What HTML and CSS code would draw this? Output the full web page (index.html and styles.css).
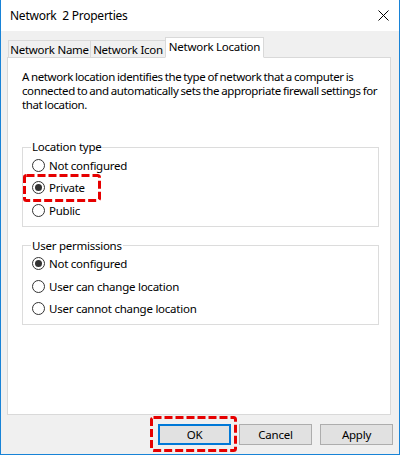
FILE: index.html
```html
<!DOCTYPE html>
<html>
<head>
<meta charset="utf-8">
<link rel="stylesheet" href="styles.css">
</head>
<body>
<div class="window">
  <div class="titlebar">
    <span class="title">Network&nbsp; 2 Properties</span>
    <svg class="close" width="11" height="11" viewBox="0 0 11 11"><path d="M0.5 0.5 L10.5 10.5 M10.5 0.5 L0.5 10.5" stroke="#000" stroke-width="1" fill="none"/></svg>
  </div>
  <div class="body">
    <div class="tabs">
      <div class="tab tab-name">Network Name</div>
      <div class="tab tab-icon">Network Icon</div>
      <div class="tab tab-loc active">Network Location</div>
    </div>
    <div class="panel">
      <p class="desc">A network location identifies the type of network that a computer is<br>connected to and automatically sets the appropriate firewall settings for<br>that location.</p>
      <fieldset class="group group-type">
        <legend>Location type</legend>
        <div class="radio"><span class="dot"></span>Not configured</div>
        <div class="radio"><span class="dot checked"></span>Private</div>
        <div class="radio"><span class="dot"></span>Public</div>
      </fieldset>
      <fieldset class="group group-perm">
        <legend>User permissions</legend>
        <div class="radio"><span class="dot checked"></span>Not configured</div>
        <div class="radio"><span class="dot"></span>User can change location</div>
        <div class="radio"><span class="dot"></span>User cannot change location</div>
      </fieldset>
    </div>
    <div class="buttons">
      <div class="btn default">OK</div>
      <div class="btn">Cancel</div>
      <div class="btn">Apply</div>
    </div>
  </div>
  <svg class="mark mark-private" width="78" height="28" viewBox="0 0 78 28"><rect x="1.5" y="1.5" width="75" height="25" rx="2" fill="none" stroke="#e60000" stroke-width="3" stroke-dasharray="8 3"/></svg>
  <svg class="mark mark-ok" width="87" height="36" viewBox="0 0 87 36"><rect x="1.5" y="1.5" width="84" height="33" rx="2" fill="none" stroke="#e60000" stroke-width="3" stroke-dasharray="8 3"/></svg>
</div>
</body>
</html>
```
FILE: styles.css
```css
html, body {
  margin: 0;
  padding: 0;
  background: #ffffff;
}
body {
  font-family: "Noto Sans", "Open Sans", sans-serif;
  font-size: 11.5px;
  letter-spacing: -0.25px;
  color: #000;
}
.window {
  position: relative;
  width: 400px;
  height: 455px;
  box-sizing: border-box;
  border: 1px solid #1883d7;
  border-top: none;
  display: flex;
  flex-direction: column;
}
.titlebar {
  height: 31px;
  flex: none;
  background: #fff;
  display: flex;
  align-items: center;
  justify-content: space-between;
  padding: 0 10px 0 9px;
}
.title {
  font-size: 12px;
}
.close {
  display: block;
}
.body {
  flex: 1;
  background: #f0f0f0;
  padding: 7px 8px 0 6px;
  display: flex;
  flex-direction: column;
}
.tabs {
  display: flex;
  align-items: flex-end;
  height: 20px;
  padding-left: 1px;
  position: relative;
  z-index: 1;
  margin-bottom: -1px;
}
.tab {
  box-sizing: border-box;
  border: 1px solid #d9d9d9;
  height: 18px;
  background: #f0f0f0;
  display: flex;
  align-items: center;
  justify-content: center;
  white-space: nowrap;
}
.tab-name { width: 83px; }
.tab-icon { width: 76px; margin-left: -1px; }
.tab-loc { width: 99px; margin-left: -1px; }
.tab.active {
  height: 21px;
  background: #fff;
  border-bottom: 1px solid #fff;
  align-items: flex-start;
  padding-top: 1px;
}
.panel {
  height: 358px;
  box-sizing: border-box;
  background: #fff;
  border: 1px solid #d9d9d9;
  padding: 12px 11px 0 14px;
  display: flex;
  flex-direction: column;
}
.desc {
  margin: 0;
  line-height: 14px;
  letter-spacing: -0.4px;
  word-spacing: -0.5px;
  white-space: nowrap;
}
.group {
  margin: 0;
  border: 1px solid #dcdcdc;
  padding: 0 8px 4px 8px;
}
.group legend {
  padding: 0 1px;
  margin-left: 0;
  line-height: 14px;
}
.group-type {
  margin-top: 28px;
}
.group-perm {
  margin-top: 12px;
}
.radio {
  display: flex;
  align-items: center;
  height: 22.5px;
  gap: 4px;
  padding-left: 1px;
  white-space: nowrap;
}
.dot {
  width: 13px;
  height: 13px;
  box-sizing: border-box;
  border: 1px solid #333;
  border-radius: 50%;
  background: #fff;
  display: flex;
  align-items: center;
  justify-content: center;
  flex: none;
}
.dot.checked::after {
  content: "";
  width: 7px;
  height: 7px;
  border-radius: 50%;
  background: #333;
}
.buttons {
  display: flex;
  justify-content: flex-end;
  gap: 8px;
  margin-top: 9px;
  margin-right: -2px;
}
.btn {
  width: 73px;
  height: 21px;
  box-sizing: border-box;
  border: 1px solid #adadad;
  background: #e1e1e1;
  display: flex;
  align-items: center;
  justify-content: center;
}
.btn.default {
  border: 2px solid #0078d7;
}
.mark {
  position: absolute;
  display: block;
}
.mark-private {
  left: 22px;
  top: 174px;
}
.mark-ok {
  left: 149px;
  top: 416px;
}
```
